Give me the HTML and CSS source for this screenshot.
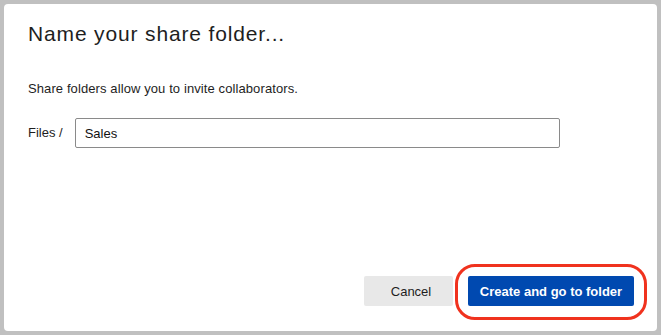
FILE: index.html
```html
<!DOCTYPE html>
<html>
<head>
<meta charset="utf-8">
<link rel="stylesheet" href="styles.css">
</head>
<body>
<div class="dialog">
  <h1 class="title">Name your share folder...</h1>
  <p class="desc">Share folders allow you to invite collaborators.</p>
  <div class="field">
    <span class="prefix">Files /</span>
    <div class="input">Sales</div>
  </div>
  <div class="footer">
    <button class="btn cancel">Cancel</button>
    <div class="primary-wrap">
      <button class="btn primary">Create and go to folder</button>
      <span class="highlight"></span>
    </div>
  </div>
</div>
</body>
</html>
```
FILE: styles.css
```css
html, body {
  margin: 0;
  padding: 0;
  background: #c0c0c0;
  width: 661px;
  height: 335px;
  overflow: hidden;
  font-family: "Liberation Sans", Arial, sans-serif;
  color: #1e1e1e;
}
.dialog {
  box-sizing: border-box;
  margin: 4px 0 0 4px;
  width: 653px;
  height: 327px;
  background: #fff;
  border-radius: 4px;
  padding: 0 23px 25px 24px;
  display: flex;
  flex-direction: column;
}
.title {
  margin: 18px 0 0 0;
  font-size: 21px;
  line-height: 24px;
  font-weight: normal;
  letter-spacing: 0.85px;
  color: #1e1e1e;
}
.desc {
  margin: 35px 0 0 0;
  font-size: 13px;
  line-height: 16px;
  letter-spacing: 0.1px;
}
.field {
  margin-top: 21px;
  display: flex;
  align-items: center;
  gap: 12px;
}
.prefix {
  font-size: 13px;
  line-height: 16px;
}
.input {
  box-sizing: border-box;
  width: 485px;
  height: 30px;
  border: 1px solid #8a8a8a;
  border-radius: 2px;
  padding: 1px 9px 0;
  font-size: 13px;
  line-height: 28px;
  color: #111;
}
.footer {
  margin-top: auto;
  display: flex;
  justify-content: flex-end;
  align-items: center;
  gap: 15px;
}
.btn {
  border: none;
  height: 30px;
  border-radius: 2px;
  font-family: "Liberation Sans", Arial, sans-serif;
  font-size: 13px;
  padding: 0;
  cursor: pointer;
}
.cancel {
  width: 89px;
  background: #e8e8e8;
  color: #1e1e1e;
  padding-left: 5px;
}
.primary-wrap {
  position: relative;
}
.primary {
  width: 166px;
  background: #0049b0;
  color: #fff;
  font-weight: bold;
  display: block;
}
.highlight {
  position: absolute;
  left: -13px;
  top: -12px;
  right: -13px;
  bottom: -14px;
  border: 3px solid #f0321e;
  border-radius: 20px;
  pointer-events: none;
}
```
